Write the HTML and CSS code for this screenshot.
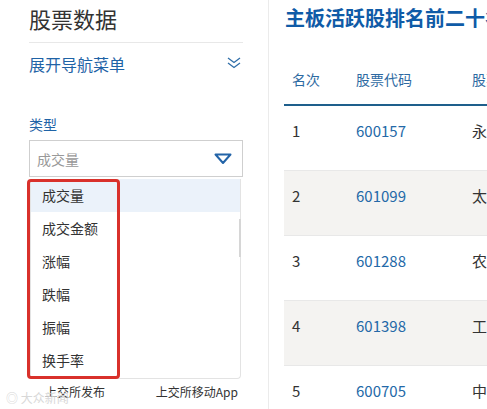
FILE: index.html
```html
<!DOCTYPE html>
<html lang="zh-CN">
<head>
    <meta charset="UTF-8">
    <meta name="viewport" content="width=device-width, initial-scale=1.0">
    <title>股票数据</title>
    <link rel="stylesheet" href="styles.css">
</head>
<body>
    <aside class="sidebar">
        <h2 class="side-title">股票数据</h2>
        <div class="nav-toggle">
            <span>展开导航菜单</span>
            <svg class="chevrons" width="14" height="12" viewBox="0 0 14 12">
                <polyline points="1,1 7,5.5 13,1" />
                <polyline points="1,6 7,10.5 13,6" />
            </svg>
        </div>

        <div class="field-label">类型</div>
        <div class="select">
            <span class="select-value">成交量</span>
            <svg class="caret" width="18" height="12" viewBox="0 0 18 12">
                <polygon points="1.5,1.5 16.5,1.5 9,10" />
            </svg>
        </div>
        <div class="dropdown">
            <div class="option active">成交量</div>
            <div class="option">成交金额</div>
            <div class="option">涨幅</div>
            <div class="option">跌幅</div>
            <div class="option">振幅</div>
            <div class="option">换手率</div>
            <div class="scroll-thumb"></div>
            <div class="mark"></div>
        </div>

        <div class="side-links">
            <span>上交所发布</span>
            <span>上交所移动App</span>
        </div>
        <div class="watermark">◎ 大众新闻</div>
    </aside>

    <main class="content">
        <h1 class="page-title">主板活跃股排名前二十名</h1>
        <table class="rank-table">
            <thead>
                <tr>
                    <th class="col-rank">名次</th>
                    <th class="col-code">股票代码</th>
                    <th class="col-name">股票简称</th>
                </tr>
            </thead>
            <tbody>
                <tr><td>1</td><td class="code">600157</td><td>永泰能源</td></tr>
                <tr><td>2</td><td class="code">601099</td><td>太平洋</td></tr>
                <tr><td>3</td><td class="code">601288</td><td>农业银行</td></tr>
                <tr><td>4</td><td class="code">601398</td><td>工商银行</td></tr>
                <tr><td>5</td><td class="code">600705</td><td>中航产融</td></tr>
            </tbody>
        </table>
    </main>
</body>
</html>
```

FILE: styles.css
```css
body {
    margin: 0;
    height: 100vh;
    display: flex;
    overflow: hidden;
    background: #fff;
    font-family: "Noto Sans CJK SC", "Noto Sans", sans-serif;
    color: #333;
}
.sidebar {
    position: relative;
    width: 214px;
    flex-shrink: 0;
    padding: 0 25px 0 29px;
    border-right: 1px solid #ebebeb;
}
.side-title {
    margin: 0;
    padding: 3px 0 9px;
    font-size: 22px;
    font-weight: normal;
    line-height: 30px;
    color: #333;
    border-bottom: 1px solid #e8e8e8;
}
.nav-toggle {
    display: flex;
    justify-content: space-between;
    align-items: center;
    padding-top: 10px;
    line-height: 22px;
    font-size: 16px;
    color: #1f63a6;
}
.chevrons {
    margin-right: 2px;
    margin-top: -2px;
}
.chevrons polyline {
    fill: none;
    stroke: #2f6ea8;
    stroke-width: 1.3;
}
.field-label {
    margin-top: 39px;
    font-size: 14px;
    line-height: 20px;
    color: #1f63a6;
}
.select {
    margin-top: 6px;
    height: 35px;
    border: 1px solid #cfcfcf;
    display: flex;
    justify-content: space-between;
    align-items: center;
    padding: 0 10px 0 7px;
}
.select-value {
    font-size: 14px;
    color: #999;
}
.caret polygon {
    fill: none;
    stroke: #2364a8;
    stroke-width: 2;
    stroke-linejoin: round;
}
.dropdown {
    position: relative;
    margin: 2px 2px 0 1px;
    height: 199px;
    border: 1px solid #e3e3e3;
    border-top: none;
    border-radius: 0 0 4px 4px;
}
.option {
    height: 33px;
    line-height: 33px;
    padding-left: 11px;
    font-size: 14px;
    color: #333;
}
.option.active {
    background: #ebf2fa;
}
.scroll-thumb {
    position: absolute;
    right: -1px;
    top: 40px;
    width: 2px;
    height: 38px;
    background: #d6d6d6;
}
.mark {
    position: absolute;
    left: -4px;
    top: 0;
    width: 87px;
    height: 194px;
    border: 3px solid #d9312b;
    border-radius: 4px;
}
.side-links {
    display: flex;
    justify-content: space-between;
    padding: 5px 5px 0 16px;
    font-size: 12px;
    line-height: 16px;
    color: #333;
}
.watermark {
    position: absolute;
    left: 6px;
    bottom: 3px;
    font-size: 12px;
    color: #d8d8d8;
}
.content {
    flex: 1;
    min-width: 0;
    overflow: hidden;
    padding-left: 16px;
}
.page-title {
    margin: 0;
    padding-top: 5px;
    font-size: 20px;
    line-height: 26px;
    font-weight: bold;
    color: #0f5ba7;
    white-space: nowrap;
}
.rank-table {
    margin-top: 21px;
    margin-left: -1px;
    border-collapse: collapse;
    width: 400px;
    font-size: 14px;
    white-space: nowrap;
}
.rank-table th {
    text-align: left;
    font-weight: normal;
    color: #2e6aa2;
    padding: 17px 8px 15px;
    line-height: 20px;
    border-bottom: 2px solid #1e5f8c;
}
.rank-table td {
    padding: 15px 8px 29px;
    line-height: 20px;
    font-size: 15px;
    border-bottom: 1px solid #e8e8e8;
    color: #333;
}
.rank-table tbody tr:nth-child(even) {
    background: #f4f3f1;
}
.rank-table td.code {
    color: #2469a8;
}
.col-rank {
    width: 48px;
}
.col-code {
    width: 100px;
}
```
